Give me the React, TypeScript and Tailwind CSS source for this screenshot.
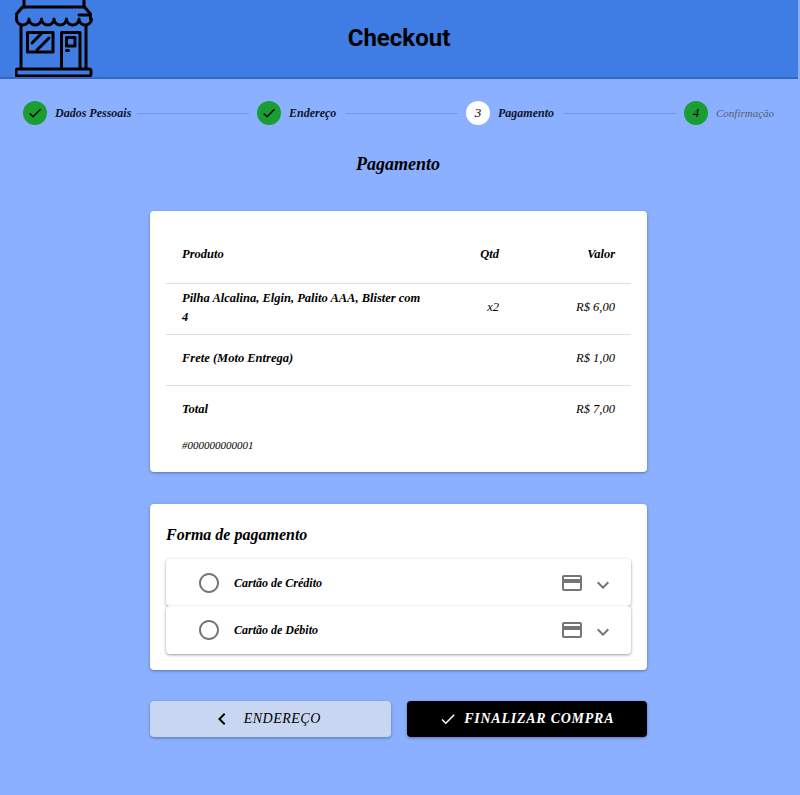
const script = "font-['Liberation_Serif',serif] italic";

const ICONS = {
  check: "M9 16.17L4.83 12l-1.42 1.41L9 19 21 7l-1.41-1.41z",
  card: "M20 4H4c-1.11 0-1.99.89-1.99 2L2 18c0 1.11.89 2 2 2h16c1.11 0 2-.89 2-2V6c0-1.11-.89-2-2-2zm0 14H4v-6h16v6zm0-10H4V6h16v2z",
  more: "M16.59 8.59L12 13.17 7.41 8.59 6 10l6 6 6-6z",
  radio: "M12 2C6.48 2 2 6.48 2 12s4.48 10 10 10 10-4.48 10-10S17.52 2 12 2zm0 18c-4.42 0-8-3.58-8-8s3.58-8 8-8 8 3.58 8 8-3.58 8-8 8z",
  back: "M15.41 7.41L14 6l-6 6 6 6 1.41-1.41L10.83 12z",
};

function Icon({ d, className }: { d: string; className: string }) {
  return (
    <svg viewBox="0 0 24 24" className={className} fill="currentColor">
      <path d={d} />
    </svg>
  );
}

function StoreLogo() {
  return (
    <svg width="78" height="78" viewBox="16 0 78 78" fill="none" stroke="#000" strokeWidth="3" strokeLinejoin="round" strokeLinecap="round">
      <path d="M25 -2V7M85 -2V7" />
      <path d="M17.500 19V14L23.500 7H85.500L91.500 14V19" />
      <path d="M17.500 19a6.250 6 0 0 0 12.500 0a6.250 6 0 0 0 12.500 0a6.250 6 0 0 0 12.500 0a6.250 6 0 0 0 12.500 0a6.250 6 0 0 0 12.500 0a6.250 6 0 0 0 12.500 0" />
      <path d="M80 15H91" />
      <path d="M22 26V68M87 26V68" />
      <rect x="17" y="69" width="75" height="7" rx="2" />
      <rect x="28.500" y="32.500" width="25.500" height="19.500" />
      <path d="M33 43L42 34M38 50L50 38" />
      <path d="M62.500 68V32.500H81V68" />
      <rect x="67.500" y="37.500" width="8.500" height="8.500" />
      <path d="M67.500 50.500H69.500" />
    </svg>
  );
}

function Step({ icon, label, labelWidth, active, muted }: { icon: React.ReactNode; label: string; labelWidth: string; active?: boolean; muted?: boolean }) {
  return (
    <div className="flex items-center">
      <div className={`flex h-6 w-6 items-center justify-center rounded-full text-[13px] text-black ${active ? "bg-white" : "bg-[#1a9e32]"}`}>
        {icon}
      </div>
      <span className={`ml-2 whitespace-nowrap font-bold ${labelWidth} ${muted ? "text-[11px] text-[#555e78] font-normal" : "text-[12px] text-[#10152b]"}`}>
        {label}
      </span>
    </div>
  );
}

function Line() {
  return <div className="mx-2 h-px flex-1 bg-[#7397e2]" />;
}

function Row({ name, qtd, valor, head, last }: { name: React.ReactNode; qtd?: string; valor: string; head?: boolean; last?: boolean }) {
  return (
    <div className={`grid grid-cols-[1fr_64px_116px] items-center px-4 text-[12.5px] leading-[19px] text-black ${last ? "h-[49px] pb-[2px]" : "border-b border-[#dfdfdf]"} ${head ? "h-[57px] pb-[2px]" : last ? "" : "h-[51px] pb-[3px]"}`}>
      <div className="font-bold">{name}</div>
      <div className={`text-right ${head ? "font-bold" : ""}`}>{qtd}</div>
      <div className={`text-right ${head ? "font-bold" : ""}`}>{valor}</div>
    </div>
  );
}

function PayOption({ label, top }: { label: string; top?: boolean }) {
  return (
    <div className={`relative flex items-center rounded bg-white pl-[31px] pr-4 shadow-[0_1px_3px_rgba(0,0,0,0.4)] ${top ? "h-[47px]" : "h-[48px]"}`}>
      <Icon d={ICONS.radio} className="h-6 w-6 text-[#757575]" />
      <span className="ml-[13px] flex-1 text-[12px] font-bold text-black">{label}</span>
      <Icon d={ICONS.card} className="h-6 w-6 text-[#757575]" />
      <Icon d={ICONS.more} className="ml-[7px] h-6 w-6 translate-y-[2px] text-[#757575]" />
    </div>
  );
}

export default function App() {
  return (
    <div className={`min-h-[795px] bg-[#8bb0ff] ${script}`}>
      <header className="mr-[2px] grid h-[79px] grid-cols-[1fr_auto_1fr] items-center overflow-hidden border-b-2 border-[#3567bf] bg-[#3f7de4]">
        <div className="flex h-[78px] pl-[15px]">
          <StoreLogo />
        </div>
        <h1 className="pb-[2px] font-['Roboto',sans-serif] text-[24px] font-bold not-italic text-black">Checkout</h1>
        <div />
      </header>

      <div className="flex items-center pl-[23px] pr-[26px] pt-[22px]">
        <Step icon={<Icon d={ICONS.check} className="h-4 w-4" />} label="Dados Pessoais" labelWidth="w-[74px]" />
        <Line />
        <Step icon={<Icon d={ICONS.check} className="h-4 w-4" />} label="Endereço" labelWidth="w-[49px]" />
        <Line />
        <Step icon="3" label="Pagamento" labelWidth="w-[58px]" active />
        <Line />
        <Step icon="4" label="Confirmação" labelWidth="w-[58px]" muted />
      </div>

      <h2 className="mt-[25px] pr-[4px] text-center text-[18px] font-bold leading-7 text-black">Pagamento</h2>

      <main className="ml-[150px] mt-[33px] w-[497px]">
        <section className="rounded bg-white px-4 pt-4 pb-[17px] shadow-[0_1px_3px_rgba(0,0,0,0.35)]">
          <Row head name="Produto" qtd="Qtd" valor="Valor" />
          <Row name={<>Pilha Alcalina, Elgin, Palito AAA, Blister com<br />4</>} qtd="x2" valor="R$ 6,00" />
          <Row name="Frete (Moto Entrega)" valor="R$ 1,00" />
          <Row last name="Total" valor="R$ 7,00" />
          <p className="px-4 text-[11px] leading-5 text-black">#000000000001</p>
        </section>

        <section className="mt-8 rounded bg-white px-4 pt-4 pb-4 shadow-[0_1px_3px_rgba(0,0,0,0.35)]">
          <h3 className="h-[39px] pt-[1px] text-[16px] font-bold leading-7 text-black">Forma de pagamento</h3>
          <PayOption top label="Cartão de Crédito" />
          <PayOption label="Cartão de Débito" />
        </section>

        <div className="mt-[31px] grid grid-cols-2 gap-4">
          <button className="flex h-9 items-center justify-center rounded bg-[#c9d6f1] pb-[2px] pr-[10px] text-[14px] tracking-[0.5px] text-black shadow-[0_1px_3px_rgba(0,0,0,0.35)]">
            <Icon d={ICONS.back} className="mr-[10px] h-6 w-6 translate-y-px" />
            ENDEREÇO
          </button>
          <button className="flex h-9 items-center justify-center rounded bg-black pb-[2px] text-[14px] font-bold tracking-[0.75px] text-white shadow-[0_1px_3px_rgba(0,0,0,0.35)]">
            <Icon d={ICONS.check} className="mr-[7px] h-[18px] w-[18px] translate-y-px" />
            FINALIZAR COMPRA
          </button>
        </div>
      </main>
    </div>
  );
}
